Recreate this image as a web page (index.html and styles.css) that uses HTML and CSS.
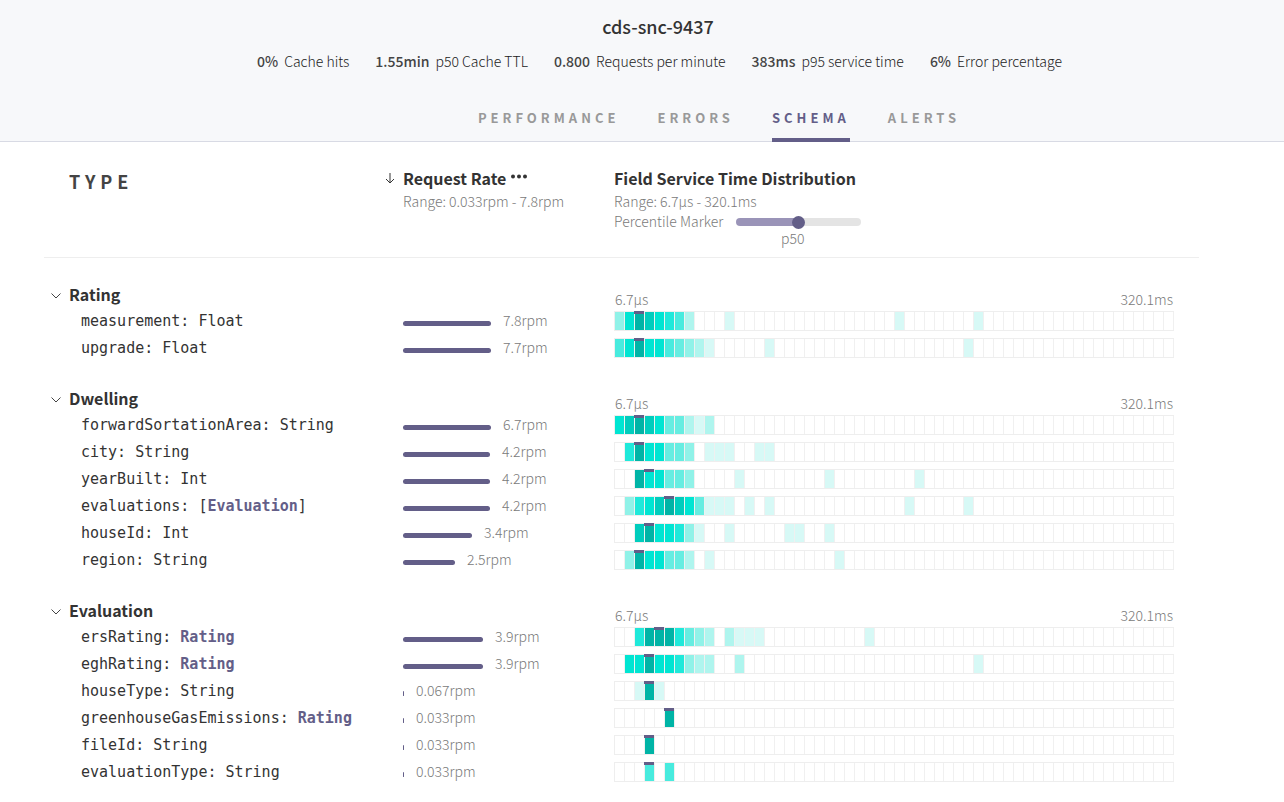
FILE: index.html
```
<!DOCTYPE html>
<html lang="en">
<head>
<meta charset="utf-8">
<title>cds-snc-9437 schema</title>
<link rel="stylesheet" href="styles.css">
</head>
<body>
<header class="page-header">
  <h1 class="title">cds-snc-9437</h1>
  <ul class="stats">
    <li><strong>0%</strong><span>Cache hits</span></li>
    <li><strong>1.55min</strong><span>p50 Cache TTL</span></li>
    <li><strong>0.800</strong><span>Requests per minute</span></li>
    <li><strong>383ms</strong><span>p95 service time</span></li>
    <li><strong>6%</strong><span>Error percentage</span></li>
  </ul>
  <nav class="tabs">
    <a class="tab" href="#performance">PERFORMANCE</a>
    <a class="tab" href="#errors">ERRORS</a>
    <a class="tab active" href="#schema" aria-current="page">SCHEMA</a>
    <a class="tab" href="#alerts">ALERTS</a>
  </nav>
</header>
<main class="content">
  <table class="schema" id="schema">
    <colgroup>
      <col class="col-type">
      <col class="col-rate">
      <col>
    </colgroup>
    <thead>
      <tr>
        <th class="type-head" scope="col">TYPE</th>
        <th class="rate-head" scope="col">
          <div class="head-title">
            <svg class="sort-arrow" viewBox="0 0 10 12" aria-hidden="true"><path d="M5 1v10M1 7l4 4 4-4"/></svg>
            <span>Request Rate</span>
            <button class="more" type="button" aria-label="Rate options"><svg viewBox="0 0 16 5" aria-hidden="true"><circle cx="2" cy="2.5" r="2"/><circle cx="8" cy="2.5" r="2"/><circle cx="14" cy="2.5" r="2"/></svg></button>
          </div>
          <div class="head-note">Range: 0.033rpm - 7.8rpm</div>
        </th>
        <th scope="col">
          <div class="head-title">Field Service Time Distribution</div>
          <div class="head-note">Range: 6.7µs - 320.1ms</div>
          <div class="percentile">
            <label class="head-note" for="percentile">Percentile Marker</label>
            <input class="slider" type="range" id="percentile" min="0" max="100" value="50">
            <output class="slider-value" for="percentile">p50</output>
          </div>
        </th>
      </tr>
    </thead>
  </table>
</main>
<script src="schema.js"></script>
</body>
</html>
```
FILE: schema.js
```
// Each field: name, type, linked type?, rate label, bar width, marker bucket,
// bucket levels (0-9) from the first bucket, single low buckets further right.
const groups = [
  ["Rating", [
    ["measurement", "Float", false, "7.8rpm", 88, 2, "379876520001", [28, 36]],
    ["upgrade", "Float", false, "7.7rpm", 88, 2, "5797754321", [15, 35]]
  ]],
  ["Dwelling", [
    ["forwardSortationArea", "String", false, "6.7rpm", 88, 2, "7898744212", []],
    ["city", "String", false, "4.2rpm", 87, 2, "0697744301110011", []],
    ["yearBuilt", "Int", false, "4.2rpm", 87, 3, "00977443", [12, 21, 30]],
    ["evaluations", "Evaluation", "list", "4.2rpm", 87, 5, "0367898741110101", [29, 35]],
    ["houseId", "Int", false, "3.4rpm", 69, 3, "008977631", [11, 17, 18, 21]],
    ["region", "String", false, "2.5rpm", 52, 2, "0397744201", [22]]
  ]],
  ["Evaluation", [
    ["ersRating", "Rating", "link", "3.9rpm", 80, 4, "006999643202111", [25]],
    ["eghRating", "Rating", "link", "3.9rpm", 80, 3, "0779776322002", [36]],
    ["houseType", "String", false, "0.067rpm", 1, 3, "00191", []],
    ["greenhouseGasEmissions", "Rating", "link", "0.033rpm", 1, 5, "000009", []],
    ["fileId", "String", false, "0.033rpm", 1, 3, "0009", []],
    ["evaluationType", "String", false, "0.033rpm", 1, 3, "000505", []]
  ]]
];
const BUCKETS = 56;

function strip(marker, levels, extra) {
  let cells = "";
  for (let i = 0; i < BUCKETS; i++) {
    const level = extra.includes(i) ? 1 : Number(levels[i] || 0);
    cells += `<span class="bucket level-${level}${i === marker ? " marker" : ""}"></span>`;
  }
  return `<div class="strip">${cells}</div>`;
}

function fieldType(type, kind) {
  if (!kind) return type;
  const link = `<a class="type-link" href="#${type}">${type}</a>`;
  return kind === "list" ? `[${link}]` : link;
}

document.getElementById("schema").insertAdjacentHTML("beforeend", groups.map(([name, fields]) => `
  <tbody id="${name}">
    <tr class="group-row">
      <th colspan="2" scope="rowgroup"><button class="toggle" type="button" aria-expanded="true"><svg class="chevron" viewBox="0 0 10 6" aria-hidden="true"><path d="M0.5 0.5L5 5L9.500 0.5"/></svg>${name}</button></th>
      <td><div class="scale"><span>6.7µs</span><span>320.1ms</span></div></td>
    </tr>
    ${fields.map(([field, type, kind, rate, width, marker, levels, extra]) => `
    <tr class="field-row">
      <td class="field">${field}: ${fieldType(type, kind)}</td>
      <td class="rate-cell"><div class="rate"><span class="bar" style="width:${width}px"></span>${rate}</div></td>
      <td>${strip(marker, levels, extra)}</td>
    </tr>`).join("")}
  </tbody>`).join(""));

const slider = document.getElementById("percentile");
slider.addEventListener("input", () => {
  slider.nextElementSibling.value = "p" + slider.value;
});
```
FILE: styles.css
```
* { box-sizing: border-box; }
body {
  margin: 0;
  overflow-x: hidden;
  background: #fff;
  color: #333;
  font: 300 14px/20px "Noto Sans CJK SC", "Open Sans", sans-serif;
}
button { border: 0; padding: 0; background: none; color: inherit; font: inherit; }

.page-header {
  padding: 13px 0 0;
  background: #f7f8fa;
  border-bottom: 1px solid #d8dae4;
}
.title {
  margin: 0;
  padding-left: 32px;
  text-align: center;
  font-size: 18px;
  line-height: 26px;
  font-weight: 500;
}
.stats {
  display: flex;
  justify-content: center;
  gap: 26px;
  margin: 12px 0 0;
  padding: 0 0 0 35px;
  list-style: none;
  color: #222;
}
.stats li { display: flex; gap: 6px; white-space: nowrap; }
.stats strong { color: #444; font-weight: 500; }
.tabs {
  display: flex;
  justify-content: center;
  gap: 38px;
  margin: 37px 0 -1px;
  padding-left: 154px;
}
.tab {
  padding-bottom: 10px;
  border-bottom: 4px solid transparent;
  color: #999;
  font-size: 13px;
  font-weight: 700;
  letter-spacing: 4px;
  text-decoration: none;
}
.tab.active { color: #635e88; border-color: #635e88; }

.content { padding: 0 85px 12px 44px; }
.schema { width: 100%; table-layout: fixed; border-spacing: 0; }
.col-type { width: 359px; }
.col-rate { width: 211px; }
.schema th, .schema td { padding: 0; text-align: left; vertical-align: top; }
.schema tr > :last-child { padding-right: 25px; }
.schema thead th {
  height: 116px;
  padding-top: 24px;
  border-bottom: 1px solid #eee;
  font-weight: 300;
}
.schema thead .type-head {
  padding: 29px 0 0 25px;
  color: #444;
  font-size: 18px;
  font-weight: 700;
  letter-spacing: 5px;
}
.head-title {
  height: 25px;
  font-size: 16px;
  line-height: 24px;
  font-weight: 700;
}
.rate-head .head-title { display: flex; align-items: center; padding-bottom: 1px; }
.head-note { color: #7a7a7a; line-height: 20px; }
.sort-arrow {
  width: 10px;
  height: 12px;
  margin: 0 8px 0 -18px;
  fill: none;
  stroke: #333;
}
.more { display: flex; margin: 0 0 3px 5px; }
.more svg { width: 16px; height: 5px; fill: #333; }
.percentile {
  display: grid;
  grid-template-columns: auto 125px;
  column-gap: 13px;
  justify-content: start;
  align-items: center;
}
.slider {
  appearance: none;
  width: 100%;
  height: 8px;
  margin: 2px 0 0;
  border-radius: 4px;
  background: linear-gradient(to right, #9a94b8 50%, #e4e4e4 50%);
}
.slider::-webkit-slider-thumb {
  appearance: none;
  width: 13px;
  height: 13px;
  border-radius: 50%;
  background: #635e88;
}
.slider-value {
  grid-column: 2;
  margin-right: 12px;
  text-align: center;
  color: #7a7a7a;
  line-height: 14px;
}

.group-row { height: 50px; }
.toggle {
  display: flex;
  align-items: center;
  margin: 24px 0 0 7px;
  font-size: 16px;
  line-height: 24px;
  font-weight: 700;
}
.chevron { width: 10px; height: 6px; margin: 4px 8px 0 0; fill: none; stroke: #444; }
.scale {
  display: flex;
  justify-content: space-between;
  padding: 32px 1px 0;
  color: #7a7a7a;
  line-height: 18px;
}
.field-row { height: 27px; }
.field-row > td { padding-top: 3px; }
.field-row > .rate-cell { padding-top: 2px; }
.schema .field {
  padding-left: 37px;
  white-space: nowrap;
  font: 15px/20px "DejaVu Sans Mono", monospace;
}
.type-link { color: #635e88; font-weight: 700; text-decoration: none; }
.rate { display: flex; gap: 12px; color: #7a7a7a; }
.bar { height: 5px; margin-top: 11px; border-radius: 3px; background: #635e88; }
.strip {
  display: flex;
  height: 20px;
  border: 1px solid #eee;
  border-right: 0;
}
.bucket { position: relative; flex: 1; border-right: 1px solid #f0f0f0; background-clip: padding-box; }
.marker::before {
  content: "";
  position: absolute;
  inset: -1px 0 auto -1px;
  height: 3px;
  background: #635e88;
}
.level-1 { background-color: #d7f9f6; }
.level-2 { background-color: #aff5ee; }
.level-3 { background-color: #90f2e8; }
.level-4 { background-color: #66ede1; }
.level-5 { background-color: #48ebde; }
.level-6 { background-color: #1fe9da; }
.level-7 { background-color: #00e5d2; }
.level-8 { background-color: #00cdbd; }
.level-9 { background-color: #00b4a6; }
```
